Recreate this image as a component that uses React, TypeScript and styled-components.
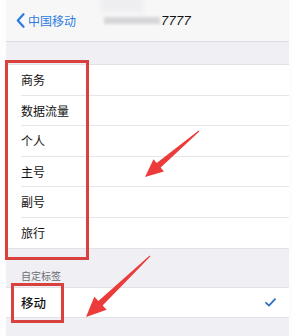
import React from "react";
import styled, { createGlobalStyle } from "styled-components";

const Global = createGlobalStyle`
  html, body { margin: 0; padding: 0; background: #fff; }
  body { font-family: "Noto Sans CJK SC", "Noto Sans", sans-serif; }
`;

const Page = styled.div`
  position: relative;
  width: 292px;
  height: 336px;
  background: #fdfdfd;
  padding: 0 3px 0 6px;
  box-sizing: border-box;
  overflow: hidden;
`;

const Panel = styled.div`
  display: flex;
  flex-direction: column;
  height: 100%;
  background: #efeff4;
`;

const NavBar = styled.div`
  display: flex;
  align-items: center;
  height: 41px;
  padding-left: 10px;
  background: #f7f7f8;
  border-bottom: 1px solid #dcdce0;
  flex-shrink: 0;
`;

const Back = styled.div`
  display: flex;
  align-items: center;
  gap: 3px;
  color: #2b7be0;
  font-size: 12px;
  line-height: 1;
`;

const Title = styled.div`
  position: relative;
  display: flex;
  align-items: center;
  margin-left: 28px;
  font-family: "Liberation Sans", "Noto Sans", sans-serif;
  font-size: 13px;
  font-style: italic;
  letter-spacing: 0.3px;
  color: #111;
`;

const Blur = styled.span<{ $w: number; $h: number; $c: string }>`
  display: inline-block;
  width: ${(p) => p.$w}px;
  height: ${(p) => p.$h}px;
  margin-right: 1px;
  background: ${(p) => p.$c};
  filter: blur(1.5px);
`;

const BlurTop = styled.span`
  position: absolute;
  left: -3px;
  top: -15px;
  width: 42px;
  height: 14px;
  background: #eeeef0;
  filter: blur(2px);
`;

const Spacer = styled.div<{ $h: number }>`
  height: ${(p) => p.$h}px;
  flex-shrink: 0;
`;

const List = styled.div`
  background: #fff;
  border-top: 1px solid #e2e2e6;
  border-bottom: 1px solid #e2e2e6;
  padding-left: 15px;
`;

const Row = styled.div<{ $last?: boolean; $h?: number }>`
  display: flex;
  align-items: center;
  justify-content: space-between;
  height: ${(p) => p.$h ?? 30.5}px;
  box-sizing: border-box;
  padding-right: 13px;
  font-size: 12px;
  color: #111;
  border-bottom: ${(p) => (p.$last ? "none" : "1px solid #e6e6ea")};
`;

const BoldLabel = styled.span`
  font-size: 12.5px;
  font-weight: 500;
`;

const SectionHeader = styled.div`
  height: 38px;
  display: flex;
  align-items: flex-end;
  padding: 0 0 4px 15px;
  box-sizing: border-box;
  font-size: 10px;
  color: #6d6d72;
`;

const Box = styled.div<{ $x: number; $y: number; $w: number; $h: number }>`
  position: absolute;
  left: ${(p) => p.$x}px;
  top: ${(p) => p.$y}px;
  width: ${(p) => p.$w}px;
  height: ${(p) => p.$h}px;
  border: 3px solid #d9413f;
  box-sizing: border-box;
`;

const Overlay = styled.svg`
  position: absolute;
  left: 0;
  top: 0;
  pointer-events: none;
`;

const labels = ["商务", "数据流量", "个人", "主号", "副号", "旅行"];

export default function App() {
  return (
    <>
      <Global />
      <Page>
        <Panel>
          <NavBar>
            <Back>
              <svg width="9" height="15" viewBox="0 0 9 15">
                <path d="M7.5 1.2 L1.8 7.5 L7.5 13.8" fill="none" stroke="#2b7be0" strokeWidth="2.2" strokeLinecap="round" strokeLinejoin="round" />
              </svg>
              <span>中国移动</span>
            </Back>
            <Title>
              <BlurTop />
              <Blur $w={56} $h={7} $c="#d6d6d8" />
              <span>7777</span>
            </Title>
          </NavBar>
          <Spacer $h={22} />
          <List>
            {labels.map((l, i) => (
              <Row key={l} $last={i === labels.length - 1}>
                {l}
              </Row>
            ))}
          </List>
          <SectionHeader>自定标签</SectionHeader>
          <List>
            <Row $last $h={29}>
              <BoldLabel>移动</BoldLabel>
              <svg width="11" height="9" viewBox="0 0 11 9">
                <path d="M1 4.8 L4 7.6 L10 1.2" fill="none" stroke="#2f6fc4" strokeWidth="1.8" strokeLinecap="round" strokeLinejoin="round" />
              </svg>
            </Row>
          </List>
        </Panel>
        <Box $x={5} $y={60} $w={84} $h={200} />
        <Box $x={11} $y={283} $w={53} $h={40} />
        <Overlay width="292" height="336" viewBox="0 0 292 336">
          <polygon
            fill="#ec3b3b"
            points="198.7,130.6 156.7,163.0 153.5,159.2 145,177 163.9,171.4 160.7,167.6 199.3,131.4"
          />
          <polygon
            fill="#ec3b3b"
            points="149.7,255.6 98.4,301.0 94.3,296.7 86,317 106.7,309.7 102.6,305.4 150.3,256.4"
          />
        </Overlay>
      </Page>
    </>
  );
}
